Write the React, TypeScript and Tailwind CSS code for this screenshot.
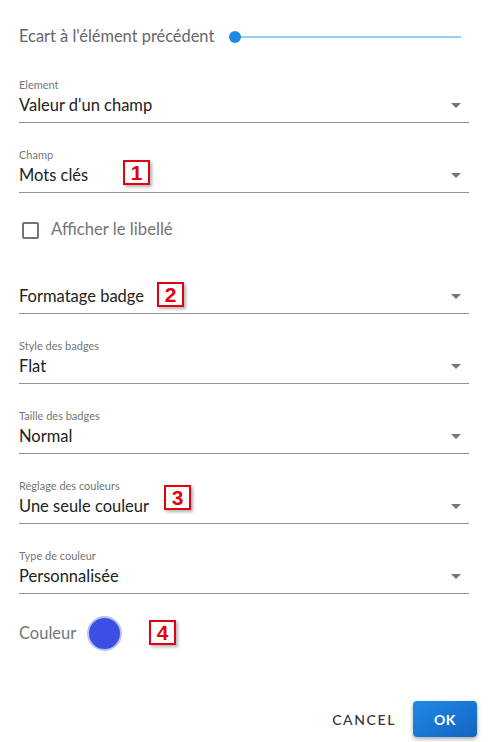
import React from "react";

const font = { fontFamily: "Lato, 'Noto Sans', sans-serif" };

const Arrow = () => (
  <svg width="10" height="5" viewBox="0 0 10 5" className="shrink-0">
    <path d="M0 0h10L5 5z" fill="#757575" />
  </svg>
);

const Marker = ({ n, className }: { n: number; className: string }) => (
  <div
    className={`absolute w-[27px] h-[25px] border-2 border-[#e3000f] bg-white text-[#e3000f] font-bold text-[21px] leading-[21px] flex items-center justify-center shadow-[2px_2px_3px_rgba(0,0,0,0.3)] ${className}`}
    style={{ fontFamily: "'Liberation Sans', Arial, sans-serif" }}
  >
    {n}
  </div>
);

const SelectField = ({
  label,
  value,
  children,
}: {
  label?: string;
  value: string;
  children?: React.ReactNode;
}) => (
  <div className="relative border-b border-[#949494] pb-[5px]">
    {label && (
      <div className="pt-[6px] h-[20px] text-[11px] leading-[12px] text-[#757575]">{label}</div>
    )}
    <div className="flex items-center justify-between h-[24px] pr-[8px]">
      <span className="text-[16.5px] leading-[24px] text-[#222]">{value}</span>
      <Arrow />
    </div>
    {children}
  </div>
);

export default function App() {
  return (
    <div className="w-[488px] h-[742px] bg-white px-[19px] relative" style={font}>
      {/* Slider */}
      <div className="h-[73px] flex items-center">
        <span className="text-[16.4px] text-[#666] whitespace-nowrap">Ecart à l'élément précédent</span>
        <div className="relative ml-[21px] flex-1 mr-[8px] h-[12px] flex items-center">
          <div className="w-full h-[2px] bg-[#90d2f5]" />
          <div className="absolute left-0 w-[12px] h-[12px] rounded-full bg-[#1e88e5] -translate-x-[6px]" />
        </div>
      </div>

      <div className="flex flex-col gap-[20px]">
        <SelectField label="Element" value="Valeur d'un champ" />
        <SelectField label="Champ" value="Mots clés">
          <Marker n={1} className="left-[104px] top-[17px]" />
        </SelectField>
      </div>

      {/* Checkbox */}
      <div className="mt-[17px] h-[40px] flex items-center">
        <div className="ml-[3px] w-[17px] h-[17px] border-2 border-[#737373] rounded-[2px]" />
        <span className="ml-[12px] text-[16.7px] text-[#757575]">Afficher le libellé</span>
      </div>

      <div className="mt-[34px] flex flex-col gap-[20px]">
        <SelectField value="Formatage badge">
          <Marker n={2} className="left-[138px] -top-[2px]" />
        </SelectField>
        <SelectField label="Style des badges" value="Flat" />
        <SelectField label="Taille des badges" value="Normal" />
        <SelectField label="Réglage des couleurs" value="Une seule couleur">
          <Marker n={3} className="left-[145px] top-[11px]" />
        </SelectField>
        <SelectField label="Type de couleur" value="Personnalisée" />
      </div>

      {/* Couleur */}
      <div className="relative mt-[19px] h-[40px] flex items-center">
        <span className="text-[16.5px] text-[#757575]">Couleur</span>
        <div className="ml-[11px] w-[35px] h-[35px] rounded-full bg-[#3b50e3] border-2 border-[#b9c2f3]" />
        <Marker n={4} className="left-[130px] top-[7px]" />
      </div>

      {/* Actions */}
      <div className="mt-[48px] flex justify-end items-center mr-[-8px]">
        <button className="text-[14px] font-medium tracking-[1.6px] text-[#333] mr-[17px]">CANCEL</button>
        <button className="w-[64px] h-[36px] rounded-[4px] bg-gradient-to-br from-[#1e8ae6] to-[#1565c0] text-white font-bold text-[14px] tracking-[0.5px] shadow-[0_2px_4px_rgba(0,0,0,0.35)]">
          OK
        </button>
      </div>
    </div>
  );
}
